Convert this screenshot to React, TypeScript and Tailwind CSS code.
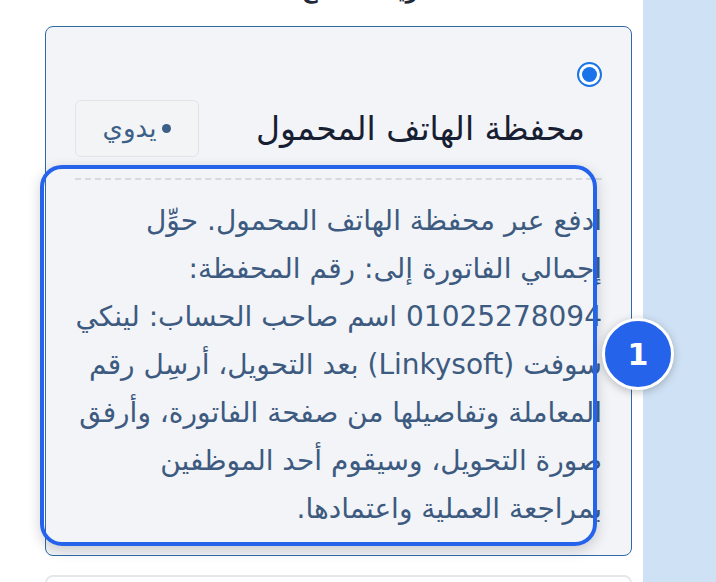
const lines = [
  "ادفع عبر محفظة الهاتف المحمول. حوِّل",
  "إجمالي الفاتورة إلى: رقم المحفظة:",
  "01025278094 اسم صاحب الحساب: لينكي",
  "سوفت (Linkysoft) بعد التحويل، أرسِل رقم",
  "المعاملة وتفاصيلها من صفحة الفاتورة، وأرفق",
  "صورة التحويل، وسيقوم أحد الموظفين",
  "بمراجعة العملية واعتمادها.",
];

export default function App() {
  return (
    <div
      dir="rtl"
      className="flex h-[582px] w-[716px] overflow-hidden bg-white"
      style={{ fontFamily: '"DejaVu Sans", "Noto Sans", sans-serif' }}
    >
      {/* side panel */}
      <div className="h-full w-[73px] shrink-0 bg-[#cfe2f5]" />

      <div className="relative flex-1">
        <div className="-mt-[24px] mr-[203px] text-[22px] font-bold leading-[30px] text-[#1f2937]">
          طريقة الدفع
        </div>

        <div className="relative mr-[11px] ml-[45px] mt-[20px]">
          {/* payment card */}
          <div className="rounded-lg border-[1.5px] border-[#2f6aa6] bg-[#f2f4f7] px-[29px] pb-[22px] pt-[35px]">
            <div className="flex">
              <span className="flex h-[25px] w-[25px] items-center justify-center rounded-full border-[2.5px] border-[#1a73e8] bg-white">
                <span className="h-[15px] w-[15px] rounded-full bg-[#1a73e8]" />
              </span>
            </div>

            <div className="mt-[13px] flex items-center justify-between">
              <div className="mr-[17px] text-[33px] leading-[40px] text-[#172033]">
                محفظة الهاتف المحمول
              </div>
              <div className="flex h-[57px] w-[124px] items-center justify-center gap-[6px] rounded-md border border-[#e3e4e6] bg-[#f3f4f6] text-[26px] text-[#3b5f86]">
                <span className="h-[9px] w-[9px] rounded-full bg-[#3b5f86]" />
                <span>يدوي</span>
              </div>
            </div>

            <div className="mt-[21px] border-t-2 border-dashed border-[#d6d9de]" />

            <div className="mt-[17px] text-[28px] leading-[48px] text-[#3d5a80]">
              {lines.map((l) => (
                <div key={l} className="whitespace-nowrap">
                  {l}
                </div>
              ))}
            </div>
          </div>

          {/* tour highlight */}
          <div className="pointer-events-none absolute left-[-5px] top-[139px] h-[381px] w-[557px] rounded-[22px] border-4 border-[#2563eb] shadow-[0_4px_14px_rgba(0,0,0,0.18)]" />
          <div className="absolute left-[557px] top-[292px] flex h-[72px] w-[72px] items-center justify-center rounded-full border-[3px] border-white bg-[#2563eb] text-[30px] font-bold text-white shadow-[0_2px_8px_rgba(0,0,0,0.25)]">
            1
          </div>
        </div>

        <div className="mr-[11px] ml-[45px] mt-[19px] h-[40px] rounded-lg border-2 border-[#e5e7eb] bg-white" />
      </div>
    </div>
  );
}
